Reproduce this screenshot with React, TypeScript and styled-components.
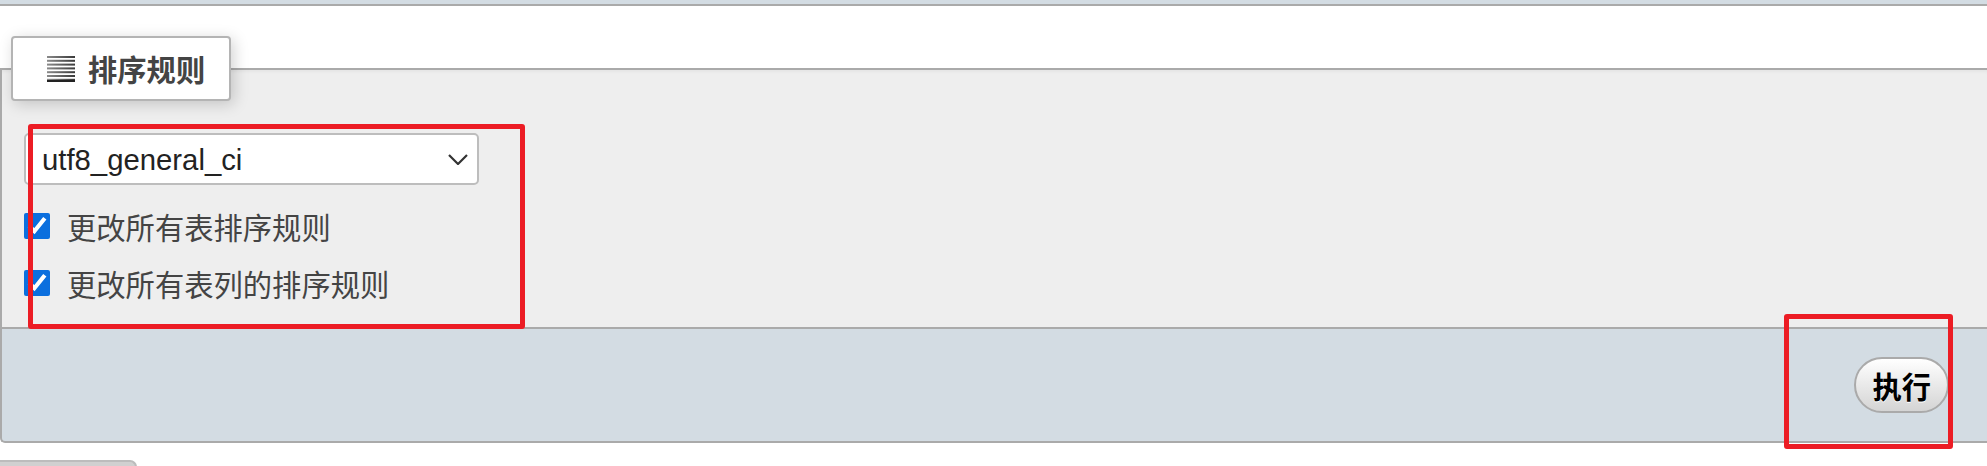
import React from 'react';
import styled, { createGlobalStyle } from 'styled-components';

const GlobalStyle = createGlobalStyle`
  html, body {
    margin: 0;
    padding: 0;
    background: #ffffff;
  }
  body {
    font-family: "Liberation Sans", "Noto Sans CJK SC", sans-serif;
    color: #444;
  }
`;

const Page = styled.div`
  position: relative;
  width: 1987px;
  height: 466px;
  overflow: hidden;
`;

// bottom of the previous block, only a sliver is visible
const PrevFooter = styled.div`
  height: 4px;
  background: #d3dce3;
  border-bottom: 2px solid #aaa;
`;

const Fieldset = styled.fieldset`
  margin: 30px 0 0;
  padding: 0 0 25px;
  border: 2px solid #aaa;
  border-right: none;
  background: #eee;
  box-shadow: inset 0 4px 4px -3px rgba(0, 0, 0, 0.06);
  min-width: 0;
`;

const Legend = styled.legend`
  display: flex;
  align-items: center;
  gap: 13px;
  box-sizing: border-box;
  height: 65px;
  margin-left: 9px;
  padding: 0 24px 0 34px;
  background: #fff;
  border: 2px solid #b4b4b4;
  border-radius: 4px;
  box-shadow: 3px 3px 15px rgba(0, 0, 0, 0.18);
  font-family: "Noto Sans CJK SC", "Liberation Sans", sans-serif;
  font-size: 29.3px;
  font-weight: bold;
  line-height: 1;
  color: #444;
`;

const Body = styled.div`
  padding: 32px 0 0 22px;
`;

const SelectWrap = styled.div`
  position: relative;
  display: inline-block;
`;

const Select = styled.select`
  appearance: none;
  display: block;
  box-sizing: border-box;
  width: 455px;
  height: 52px;
  margin: 0;
  padding: 0 40px 0 16px;
  background: #fff;
  border: 2px solid #bdbdbd;
  border-radius: 5px;
  font-family: "Liberation Sans", Arial, sans-serif;
  font-size: 29.3px;
  color: #222;
  outline: none;
`;

const Chevron = styled.svg`
  position: absolute;
  right: 11px;
  top: 21px;
  pointer-events: none;
`;

const Row = styled.label<{ $first?: boolean }>`
  display: flex;
  align-items: center;
  gap: 17px;
  height: 38px;
  margin-top: ${(p) => (p.$first ? '22px' : '19px')};
  font-family: "Noto Sans CJK SC", "Liberation Sans", sans-serif;
  font-size: 29.3px;
  line-height: 38px;
  color: #444;
`;

const Check = styled.input`
  width: 26px;
  height: 26px;
  margin: 0;
  accent-color: #0b6fde;
`;

const Footer = styled.div`
  display: flex;
  justify-content: flex-end;
  align-items: center;
  height: 112px;
  padding-right: 38px;
  background: #d3dce3;
  border: 2px solid #aaa;
  border-top: none;
  border-right: none;
  border-radius: 0 0 0 5px;
`;

const GoButton = styled.button`
  height: 56px;
  padding: 0 16px;
  border: 2px solid #aaa;
  border-radius: 28px;
  background: linear-gradient(#ffffff, #d4d4d4);
  font-family: "Noto Sans CJK SC", "Liberation Sans", sans-serif;
  font-size: 29.3px;
  font-weight: bold;
  color: #000;
  text-shadow: 0 1px 0 #fff;
  cursor: pointer;
`;

const NextTab = styled.div`
  width: 135px;
  height: 10px;
  margin-top: 17px;
  background: #d0d0d0;
  border: 2px solid #bcbcbc;
  border-bottom: none;
  border-left: none;
  border-radius: 0 7px 0 0;
`;

// red annotation frames drawn on top of the screenshot
const Mark = styled.div<{ $x: number; $y: number; $w: number; $h: number }>`
  position: absolute;
  left: ${(p) => p.$x}px;
  top: ${(p) => p.$y}px;
  width: ${(p) => p.$w}px;
  height: ${(p) => p.$h}px;
  box-sizing: border-box;
  border: 5px solid #ec1c24;
  border-radius: 3px;
  pointer-events: none;
`;

const SortIcon = () => (
  <svg width="28" height="26" viewBox="0 0 28 26">
    <defs>
      <linearGradient id="stripe" x1="0" x2="1" y1="0" y2="0">
        <stop offset="0" stopColor="#8a8a8a" />
        <stop offset="1" stopColor="#3a3a3a" />
      </linearGradient>
    </defs>
    {[0, 1, 2, 3, 4, 5, 6].map((i) => (
      <rect key={i} x="0" y={i * 3.8} width="28" height="2" fill="url(#stripe)" />
    ))}
    <rect x="0" y="24" width="28" height="2" fill="#222" />
  </svg>
);

const App: React.FC = () => {
  return (
    <>
      <GlobalStyle />
      <Page>
        <PrevFooter />
        <Fieldset>
          <Legend>
            <SortIcon />
            排序规则
          </Legend>
          <Body>
            <SelectWrap>
              <Select defaultValue="utf8_general_ci">
                <option value="utf8_general_ci">utf8_general_ci</option>
                <option value="utf8mb4_general_ci">utf8mb4_general_ci</option>
                <option value="utf8_unicode_ci">utf8_unicode_ci</option>
              </Select>
              <Chevron width="20" height="11" viewBox="0 0 20 11">
                <path d="M1 1 L10 10 L19 1" fill="none" stroke="#333" strokeWidth="2.2" />
              </Chevron>
            </SelectWrap>
            <Row $first>
              <Check type="checkbox" defaultChecked />
              更改所有表排序规则
            </Row>
            <Row>
              <Check type="checkbox" defaultChecked />
              更改所有表列的排序规则
            </Row>
          </Body>
        </Fieldset>
        <Footer>
          <GoButton type="button">执行</GoButton>
        </Footer>
        <NextTab />
        <Mark $x={28} $y={124} $w={497} $h={205} />
        <Mark $x={1784} $y={314} $w={169} $h={135} />
      </Page>
    </>
  );
};

export default App;
